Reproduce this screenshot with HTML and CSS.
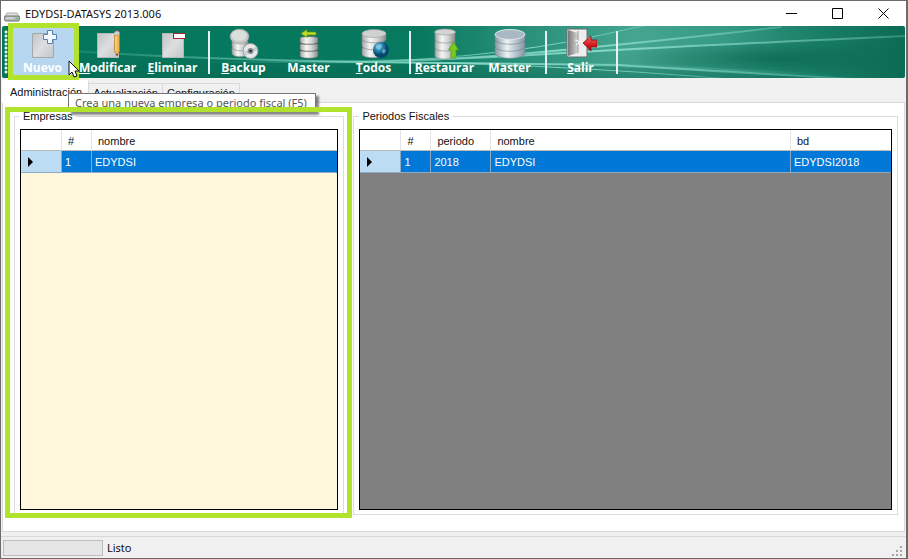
FILE: index.html
```html
<!DOCTYPE html>
<html lang="es">
<head>
<meta charset="utf-8">
<title>EDYDSI-DATASYS 2013.006</title>
<link rel="stylesheet" href="styles.css">
</head>
<body>
<svg class="defs" aria-hidden="true">
  <defs>
    <linearGradient id="metal"><stop offset="0" stop-color="#a4a6a6"/><stop offset=".35" stop-color="#f6f6f6"/><stop offset=".65" stop-color="#d2d3d3"/><stop offset="1" stop-color="#8a8d8d"/></linearGradient>
    <linearGradient id="steel"><stop offset="0" stop-color="#8798a3"/><stop offset=".4" stop-color="#eef3f6"/><stop offset="1" stop-color="#8296a3"/></linearGradient>
    <linearGradient id="paper" x2="1" y2="1"><stop offset="0" stop-color="#c2c3c4"/><stop offset=".5" stop-color="#dddedf"/><stop offset="1" stop-color="#c4c5c6"/></linearGradient>
    <radialGradient id="globe" cx=".35" cy=".3"><stop offset="0" stop-color="#8bd0e8"/><stop offset=".5" stop-color="#2b86b5"/><stop offset="1" stop-color="#07476f"/></radialGradient>
    <linearGradient id="red" x2="0" y2="1"><stop offset="0" stop-color="#f06a66"/><stop offset=".6" stop-color="#d31a1e"/><stop offset="1" stop-color="#a90b10"/></linearGradient>
    <linearGradient id="door"><stop offset="0" stop-color="#777"/><stop offset="1" stop-color="#d8d8d8"/></linearGradient>
  </defs>
</svg>
<div class="window">
  <header class="titlebar">
    <svg class="app-icon" viewBox="0 0 16 10" aria-hidden="true"><path d="M3 1h10l2.500 4h-15z" fill="#e4e5e5" stroke="#8d8f8f" stroke-width=".7"/><rect x=".5" y="4" width="15" height="5" rx="1.500" fill="#b6b9b9" stroke="#6c6f6f"/><path d="M2 6h8" stroke="#e8e8e8"/><path d="M12 6.500h2" stroke="#58c654" stroke-width="1.500"/></svg>
    <h1>EDYDSI-DATASYS 2013.006</h1>
    <div class="controls">
      <button aria-label="Minimizar"><svg viewBox="0 0 11 11"><path d="M0 5.500h11"/></svg></button>
      <button aria-label="Maximizar"><svg viewBox="0 0 11 11"><path d="M.5.5h10v10h-10z"/></svg></button>
      <button aria-label="Cerrar"><svg viewBox="0 0 11 11"><path d="M.5.5l10 10M10.500.5l-10 10"/></svg></button>
    </div>
  </header>

  <nav class="toolbar" aria-label="Herramientas">
    <svg class="waves" viewBox="0 0 904 52" preserveAspectRatio="none" aria-hidden="true">
      <defs>
        <linearGradient id="base"><stop offset="0" stop-color="#04775b"/><stop offset=".46" stop-color="#07795f"/><stop offset=".58" stop-color="#2a9079"/><stop offset=".7" stop-color="#45a590"/><stop offset=".8" stop-color="#369a84"/><stop offset=".9" stop-color="#1a7f67"/><stop offset="1" stop-color="#0b6b54"/></linearGradient>
        <linearGradient id="ray"><stop offset="0" stop-color="#8fe0ce" stop-opacity="0"/><stop offset=".55" stop-color="#8fe0ce" stop-opacity=".9"/><stop offset="1" stop-color="#8fe0ce" stop-opacity=".3"/></linearGradient>
        <linearGradient id="shade" x2="0" y2="1"><stop offset="0" stop-color="#06644e" stop-opacity="0"/><stop offset="1" stop-color="#06644e" stop-opacity=".5"/></linearGradient>
        <radialGradient id="pool" cx=".65"><stop offset="0" stop-color="#0b6a53" stop-opacity=".85"/><stop offset="1" stop-color="#0b6a53" stop-opacity="0"/></radialGradient>
      </defs>
      <rect width="904" height="52" fill="url(#base)"/>
      <path d="M560 29Q700 14 904 12V54Q760 42 560 36z" fill="url(#pool)"/>
      <path d="M0 22Q180 34 430 37T860 54H0z" fill="url(#shade)"/>
      <g fill="none" stroke="url(#ray)">
        <path d="M0 20Q170 34 400 36.500T620 39T850 53" stroke-width="2"/>
        <path d="M200 36Q400 37 530 29T904 10" stroke-width="2"/>
        <path d="M300 37Q430 36 540 26T780 1" stroke-width="2"/>
        <path d="M300 37Q480 36 600 9T690-4" stroke-width="1"/>
        <path d="M350 36Q530 36 740 54" stroke-width="1"/>
      </g>
    </svg>
    <span class="grip"></span>
    <button class="tool active" aria-describedby="tip">
      <svg viewBox="0 0 32 32"><path d="M5.500 5.500h21v24h-21z" fill="url(#paper)" stroke="#a5a8aa"/><path d="M20.500 2.500h5v4h4v5h-4v4h-5v-4h-4v-5h4z" fill="#f3f8fc" stroke="#5584b4"/></svg>
      <span>Nuevo</span>
    </button>
    <button class="tool">
      <svg viewBox="0 0 32 32"><path d="M5.500 5.500h21v24h-21z" fill="url(#paper)" stroke="#b5b8ba"/><path d="M22.500 7h5v16l-2.500 5-2.500-5z" fill="#f0b54b" stroke="#b77d28" stroke-width=".7"/><path d="M24 8v15" stroke="#ffe59c"/><path d="M22.500 4h5v3h-5z" fill="#c9cdd0"/><path d="M22.500 4q2.500-3 5 0" fill="#e58aa0"/><path d="M24 26h2l-1 2z" fill="#333"/></svg>
      <span><u>M</u>odificar</span>
    </button>
    <button class="tool">
      <svg viewBox="0 0 32 32"><path d="M5.500 5.500h21v24h-21z" fill="url(#paper)" stroke="#b5b8ba"/><rect x="16" y="5" width="13" height="6" fill="#a3262d"/><rect x="17" y="6" width="11" height="4" fill="#fff"/></svg>
      <span><u>E</u>liminar</span>
    </button>
    <span class="sep"></span>
    <button class="tool">
      <svg viewBox="0 0 32 32"><path d="M4 20v5c0 5 16 5 16 0v-5z" fill="url(#metal)" stroke="#858989" stroke-width=".6"/><path d="M4 13v6c0 5 16 5 16 0v-6z" fill="url(#metal)" stroke="#858989" stroke-width=".6"/><ellipse cx="11.500" cy="8.500" rx="9.500" ry="7.500" fill="#c5c7c7" stroke="#999" stroke-width=".6"/><ellipse cx="11" cy="7.500" rx="7.500" ry="5.500" fill="#dcdddd"/><circle cx="22.500" cy="23" r="7.500" fill="#e8e9ea" stroke="#969a9b"/><path d="M22.500 23l5-5a7 7 0 0 1 2 5zM22.500 23l-5 5a7 7 0 0 1-2-5z" fill="#c6d2ce"/><circle cx="22.500" cy="23" r="3" fill="#898d91"/><circle cx="22.500" cy="23" r="1.300" fill="#16372c"/></svg>
      <span><u>B</u>ackup</span>
    </button>
    <button class="tool">
      <svg viewBox="0 0 32 32"><g fill="url(#metal)" stroke="#5e6563" stroke-width=".7"><path d="M7 23v5c0 3 18 3 18 0v-5z"/><path d="M7 16v5c0 3 18 3 18 0v-5z"/><path d="M7 10v4c0 3 18 3 18 0v-4c0-2-18-2-18 0z"/></g><path d="M8 5.500l6-4v2.500h9v3h-9v2.500z" fill="#b9dc28" stroke="#679113" stroke-width=".7"/></svg>
      <span>Master</span>
    </button>
    <button class="tool">
      <svg viewBox="0 0 32 32"><g fill="url(#metal)" stroke="#7c8281" stroke-width=".6"><path d="M4 20v6c0 5 22 5 22 0v-6z"/><path d="M4 12v6c0 5 22 5 22 0v-6z"/><path d="M4 6v5c0 5 24 5 24 0v-5z"/></g><ellipse cx="16" cy="5.500" rx="12" ry="4" fill="#cfd1d1" stroke="#999" stroke-width=".6"/><circle cx="23" cy="22" r="8" fill="url(#globe)"/><path d="M18 17l5-1 1 3-3 3-3-2zM25 21l3 1-2 4-2-2z" fill="#86c7d6" opacity=".7"/></svg>
      <span><u>T</u>odos</span>
    </button>
    <span class="sep"></span>
    <button class="tool">
      <svg viewBox="0 0 32 32"><g fill="url(#metal)" stroke="#858b8a" stroke-width=".6"><path d="M6 21v7c0 4 20 4 20 0v-7z"/><path d="M6 13v7c0 4 20 4 20 0v-7z"/><path d="M6 4v8c0 4 20 4 20 0V4z"/></g><ellipse cx="16" cy="4" rx="10.500" ry="3" fill="#d2d4d4" stroke="#999" stroke-width=".6"/><path d="M24.500 14l5 8h-2.500v8h-5v-8h-2.500z" fill="#79c91d" stroke="#529d12" stroke-width=".7"/></svg>
      <span><u>R</u>estaurar</span>
    </button>
    <button class="tool">
      <svg viewBox="0 0 32 32"><g fill="url(#steel)" stroke="#6e808c" stroke-width=".6"><path d="M1 19v6c0 7 30 7 30 0v-6z"/><path d="M1 13v5c0 7 30 7 30 0v-5z"/><path d="M1 6v5c0 7 30 7 30 0V6z"/></g><ellipse cx="16" cy="6.500" rx="15" ry="5" fill="#a9b9c4" stroke="#dfe6ea"/></svg>
      <span>Master</span>
    </button>
    <span class="sep"></span>
    <button class="tool">
      <svg viewBox="0 0 32 32"><path d="M2 1h20v28H2z" fill="#eee" stroke="#676f6d"/><path d="M3 2l10 3v20L3 28z" fill="url(#door)"/><path d="M13 3v22" stroke="#999"/><path d="M10 12q4 0 4 3l-3 2" fill="none" stroke="#fff"/><path d="M18 15l8-7v4h6v7h-6v4z" fill="url(#red)" stroke="#8d1013" stroke-width=".8"/></svg>
      <span><u>S</u>alir</span>
    </button>
    <span class="sep"></span>
    <svg class="pointer" viewBox="0 0 12 18" aria-hidden="true"><path d="M1 1v14l3-3 2 5 3-1-2-5h4z" fill="#fff" stroke="#111"/></svg>
  </nav>

  <div class="tabs" role="tablist">
    <button role="tab" aria-selected="true" class="tab selected">Administración</button>
    <button role="tab" aria-selected="false" class="tab">Actualización</button>
    <button role="tab" aria-selected="false" class="tab">Configuración</button>
    <div class="tooltip" id="tip" role="tooltip">Crea una nueva empresa o periodo fiscal (F5)</div>
  </div>

  <main class="page">
    <fieldset class="group marked">
      <legend>Empresas</legend>
      <div class="grid cream">
        <table>
          <colgroup><col class="c-head"><col class="c-num"><col></colgroup>
          <thead><tr><th></th><th>#</th><th>nombre</th></tr></thead>
          <tbody><tr><td class="current"><i></i></td><td>1</td><td>EDYDSI</td></tr></tbody>
        </table>
      </div>
    </fieldset>
    <fieldset class="group">
      <legend>Periodos Fiscales</legend>
      <div class="grid gray">
        <table>
          <colgroup><col class="c-head"><col class="c-num"><col class="c-period"><col><col class="c-db"></colgroup>
          <thead><tr><th></th><th>#</th><th>periodo</th><th>nombre</th><th>bd</th></tr></thead>
          <tbody><tr><td class="current"><i></i></td><td>1</td><td>2018</td><td>EDYDSI</td><td>EDYDSI2018</td></tr></tbody>
        </table>
      </div>
    </fieldset>
  </main>

  <footer class="status">
    <div class="progress"></div>
    <span>Listo</span>
    <svg class="resize" viewBox="0 0 12 12" aria-hidden="true"><path d="M8 0h2v2H8zM4 4h2v2H4zM8 4h2v2H8zM0 8h2v2H0zM4 8h2v2H4zM8 8h2v2H8z" fill="#a5a5a5"/></svg>
  </footer>
</div>
</body>
</html>
```
FILE: styles.css
```css
* { box-sizing: border-box; }
body {
  margin: 0;
  font: 11px/14px "Liberation Sans", Arial, sans-serif;
  color: #111;
}
button {
  margin: 0;
  padding: 0;
  border: 0;
  background: none;
  font: inherit;
  color: inherit;
}
.defs { position: absolute; width: 0; height: 0; }
.window {
  display: flex;
  flex-direction: column;
  height: 100vh;
  border: 1px solid #6b6b6b;
  border-right-width: 2px;
  background: #f0f0f0;
}

.titlebar {
  display: flex;
  align-items: center;
  flex: none;
  height: 25px;
  padding-left: 3px;
  gap: 5px;
  background: #fff;
}
.app-icon { width: 16px; height: 10px; margin-top: 6px; }
.titlebar h1 {
  margin: 0;
  font: 11px/16px "Noto Sans", sans-serif;
}
.controls { display: flex; margin-left: auto; }
.controls button {
  display: grid;
  place-items: center;
  width: 46px;
  height: 25px;
}
.controls svg { width: 11px; height: 11px; fill: none; stroke: #000; }

.toolbar {
  position: relative;
  display: flex;
  flex: none;
  height: 52px;
  margin: 0 1px;
}
.waves {
  position: absolute;
  inset: 0;
  width: 100%;
  height: 100%;
  border-radius: 2px;
}
.grip {
  position: relative;
  width: 4px;
  margin: 4px 2px;
  background: radial-gradient(circle, #dff5ee 1px, transparent 2px) 0 0 / 4px 4px;
}
.tool {
  position: relative;
  display: flex;
  flex-direction: column;
  align-items: center;
  width: 65px;
  padding-top: 2px;
  font: bold 12px/16px "Open Sans", "Noto Sans", sans-serif;
  color: #fff;
}
.tool svg { width: 32px; height: 32px; }
.tool.active { background: #b7d6f0; }
.tool.active::after {
  content: "";
  position: absolute;
  inset: -3px -4px -2px -2px;
  border: 5px solid #b1e22c;
}
.sep { position: relative; width: 6px; padding: 5px 1px 4px 3px; }
.sep::before { content: ""; display: block; width: 2px; height: 100%; background: #e4f3ef; }
.pointer { position: absolute; left: 66px; top: 34px; width: 12px; height: 18px; }

.tabs {
  position: relative;
  z-index: 1;
  display: flex;
  align-items: flex-end;
  flex: none;
  height: 25px;
  margin-bottom: -1px;
  padding-left: 1px;
}
.tab {
  height: 20px;
  padding: 0 4px;
  border: 1px solid #d9d9d9;
  border-left: 0;
}
.tab.selected { height: 23px; padding: 0 6px 0 8px; border-color: transparent #d9d9d9 transparent transparent; background: #fff; }
.tooltip {
  position: absolute;
  left: 67px;
  top: 15px;
  padding: 0 8px 0 6px;
  border: 1px solid #767676;
  background: #fff;
  box-shadow: 3px 3px 2px #0007;
  font: 11px/17px "Noto Sans", sans-serif;
  color: #575757;
  white-space: nowrap;
}

.page {
  display: grid;
  grid-template-columns: 330fr 544fr;
  gap: 9px;
  flex: 1;
  min-height: 0;
  margin: 0 1px 4px;
  padding: 6px 6px 16px 11px;
  border: 1px solid #d9d9d9;
  background: #fff;
}
.group {
  position: relative;
  display: flex;
  min-width: 0;
  margin: 0;
  padding: 6px 5px 4px;
  border: 1px solid #dcdcdc;
}
.group legend { padding: 0 3px; }
.marked::after {
  content: "";
  position: absolute;
  z-index: 2;
  inset: -16px -9px -4px -10px;
  border: 5px solid #b1e22c;
  pointer-events: none;
}
.grid { flex: 1; min-width: 0; border: 1px solid #000; }
.cream { background: #fff8dc; }
.gray { background: #808080; }
table { width: 100%; border-collapse: separate; border-spacing: 0; table-layout: fixed; }
.c-head { width: 41px; }
.c-num { width: 30px; }
.c-period { width: 60px; }
.c-db { width: 100px; }
th {
  height: 21px;
  padding: 2px 6px 0;
  border-right: 1px solid #e3e3e3;
  border-bottom: 1px solid #bbb;
  background: #fff;
  font-weight: normal;
  text-align: left;
}
td {
  height: 22px;
  padding: 0 3px;
  border-right: 1px solid #8eaac4;
  border-bottom: 1px solid #8eaac4;
  background: #0078d7;
  color: #fff;
}
th:last-child, td:last-child { border-right-color: transparent; }
.current { padding-left: 7px; background: #bcdcf4; }
.current i {
  display: block;
  width: 5px;
  border: 5px solid transparent;
  border-left-color: #000;
  border-right: 0;
}

.status {
  display: flex;
  align-items: center;
  flex: none;
  height: 22px;
  padding: 0 2px;
  gap: 4px;
  border-top: 1px solid #d9d9d9;
  font: 11px/16px "Noto Sans", sans-serif;
}
.progress { width: 100px; height: 16px; border: 1px solid #bcbcbc; background: #e6e6e6; }
.resize { align-self: flex-end; width: 12px; height: 12px; margin-left: auto; }
```
